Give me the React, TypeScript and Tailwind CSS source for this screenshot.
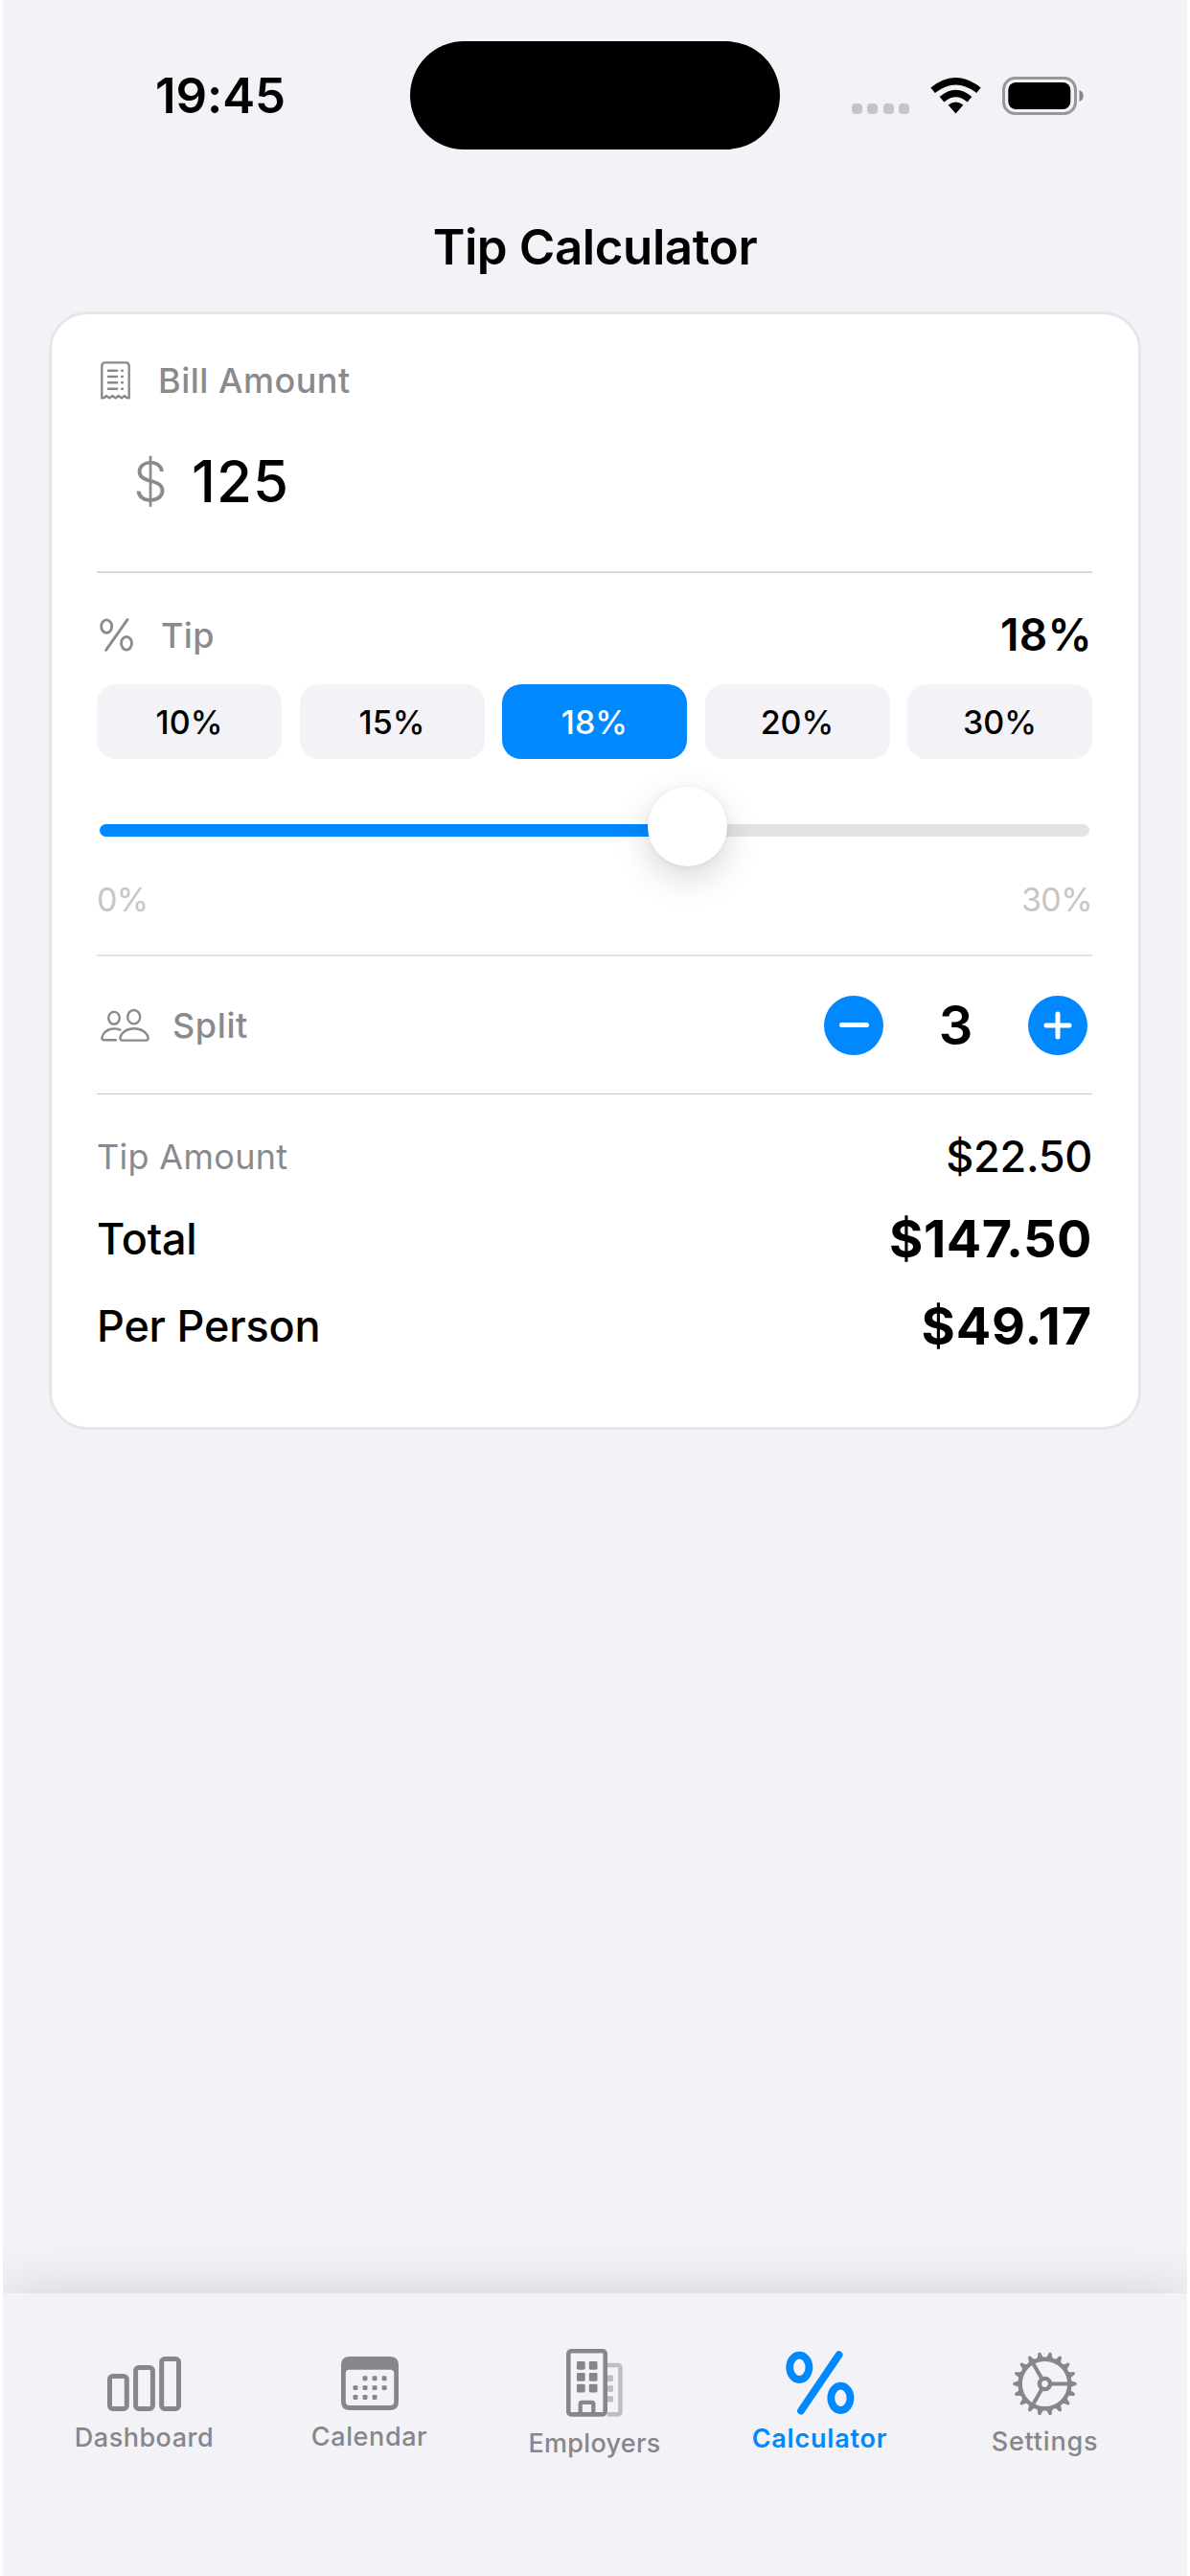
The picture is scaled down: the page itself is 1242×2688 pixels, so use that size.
import React from "react";

const tips = ["10%", "15%", "18%", "20%", "30%"];

function Wifi() {
  return (
    <svg width="53" height="38" viewBox="0 0 53 38">
      <path d="M26.5 37.5 L18.6 28.6 Q26.5 22.6 34.4 28.6 Z" fill="#000" />
      <path d="M12 22.8 Q26.5 10 41 22.8" fill="none" stroke="#000" strokeWidth="7.2" />
      <path d="M2.6 13.2 Q26.5 -5.8 50.4 13.2" fill="none" stroke="#000" strokeWidth="7.2" />
    </svg>
  );
}

function Battery() {
  return (
    <svg width="86" height="40" viewBox="0 0 86 40">
      <rect x="1.5" y="1.5" width="75" height="37" rx="12" fill="none" stroke="#98989b" strokeWidth="3" />
      <rect x="6.3" y="6" width="65" height="28" rx="8" fill="#000" />
      <path d="M80.5 14 Q84.7 15.5 84.7 20 T80.5 26 Z" fill="#87878a" />
    </svg>
  );
}

function Receipt() {
  return (
    <svg width="31" height="40" viewBox="0 0 31 40" fill="none" stroke="#8a8a8e" strokeWidth="2.4" strokeLinecap="round" strokeLinejoin="round">
      <path d="M1.3 38.3 V5 Q1.3 1.4 4.9 1.4 H26.1 Q29.7 1.4 29.7 5 V38.3 L27.2 38 L25 36 L21.8 38.4 L18.7 36 L15.5 38.4 L12.3 36 L9.2 38.4 L6 36 L3.8 38 Z" />
      <path d="M8 9.7 H17.2 M8 16 H17.2 M8 22.3 H17.2 M8 28.7 H17.2 M22.1 9.7 H22.9 M22.1 16 H22.9 M22.1 22.3 H22.9 M22.1 28.7 H22.9" />
    </svg>
  );
}

function PercentThin() {
  return (
    <svg width="35" height="35" viewBox="0 0 35 35" fill="none" stroke="#8a8a8e" strokeWidth="2.8" strokeLinecap="round">
      <ellipse cx="7.2" cy="8.6" rx="5.5" ry="6.8" />
      <ellipse cx="28" cy="26.3" rx="5.5" ry="6.8" />
      <path d="M29 1.6 L6.6 33.4" />
    </svg>
  );
}

function People() {
  return (
    <svg width="51" height="36" viewBox="0 0 51 36" fill="none" stroke="#8a8a8e" strokeWidth="2.4" strokeLinecap="round" strokeLinejoin="round">
      <ellipse cx="14" cy="10.3" rx="5.8" ry="6.4" />
      <ellipse cx="34.7" cy="9.2" rx="6.5" ry="7.2" />
      <path d="M23 33.6 C21 33.6 20.3 32.6 20.5 30.8 C21.2 26 27 21.2 35 21.2 C43 21.2 48.9 26 49.6 30.8 C49.8 32.6 49 33.6 47 33.6 Z" />
      <path d="M16 33.3 H3.8 C1.8 33.3 1.2 32.3 1.4 30.6 C2.2 26 7.2 21.4 14 21.4 C16.5 21.4 18.5 21.9 20.2 22.7" />
    </svg>
  );
}

function BarsIcon() {
  return (
    <svg width="77" height="57" viewBox="0 0 77 57" fill="none" stroke="#87868b" strokeWidth="5">
      <rect x="2.5" y="20.5" width="17.8" height="34" rx="3.2" />
      <rect x="29.6" y="11.5" width="17.8" height="43" rx="3.2" />
      <rect x="56.7" y="2.5" width="17.8" height="52" rx="3.2" />
    </svg>
  );
}

function CalendarIcon() {
  const dots = [
    [1, 0], [2, 0], [3, 0],
    [0, 1], [1, 1], [2, 1], [3, 1],
    [0, 2], [1, 2], [2, 2],
  ];
  return (
    <svg width="60" height="56" viewBox="0 0 60 56" fill="#87868b">
      <path fillRule="evenodd" d="M9 0 H51 Q60 0 60 9 V47 Q60 56 51 56 H9 Q0 56 0 47 V9 Q0 0 9 0 Z M8.5 13.7 Q4.8 13.7 4.8 17.4 V47 Q4.8 51 8.8 51 H51.2 Q55.2 51 55.2 47 V17.4 Q55.2 13.7 51.5 13.7 Z" />
      {dots.map(([c, r]) => (
        <rect key={`${c}-${r}`} x={12.5 + c * 10.05} y={20.3 + r * 9.85} width="4.9" height="4.9" rx="1.2" />
      ))}
    </svg>
  );
}

function BuildingIcon() {
  return (
    <svg width="59" height="71" viewBox="0 0 59 71" fill="none">
      <path d="M43 17 H53.5 Q56.4 17 56.4 20 V65.5 Q56.4 68.4 53.5 68.4 H43" stroke="#bfbec3" strokeWidth="4.6" />
      {[27.5, 38.3, 49.2].map((y) => (
        <rect key={y} x="42" y={y} width="7" height="6.4" rx="1" fill="#bfbec3" />
      ))}
      <rect x="2.3" y="2.3" width="38.4" height="66.1" rx="2.8" stroke="#87868b" strokeWidth="4.6" />
      {[13, 25, 36.8].map((y) => (
        <React.Fragment key={y}>
          <rect x="11" y={y} width="8.7" height="8.7" rx="1.4" fill="#87868b" />
          <rect x="23.8" y={y} width="8.7" height="8.7" rx="1.4" fill="#87868b" />
        </React.Fragment>
      ))}
      <path d="M14.7 68 V57.2 Q14.7 55.8 16.1 55.8 H26.9 Q28.3 55.8 28.3 57.2 V68" stroke="#87868b" strokeWidth="4.2" />
    </svg>
  );
}

function PercentBold() {
  return (
    <svg width="72" height="67" viewBox="0 0 72 67" fill="none" stroke="#0088ff" strokeLinecap="round">
      <ellipse cx="14.3" cy="17.3" rx="10.1" ry="12.7" strokeWidth="7.8" />
      <ellipse cx="57.4" cy="49.3" rx="10.1" ry="12.7" strokeWidth="7.8" />
      <path d="M55.6 4.2 L16 62.6" strokeWidth="7.8" />
    </svg>
  );
}

function GearIcon() {
  const teeth = Array.from({ length: 18 }, (_, i) => i * 20);
  return (
    <svg width="67" height="67" viewBox="-33.5 -33.5 67 67" fill="none" stroke="#87868b">
      <circle r="25.8" strokeWidth="4.4" />
      <circle r="5.6" strokeWidth="4.4" />
      {[0, 120, 240].map((a) => (
        <path key={a} d="M7 0 H25" strokeWidth="4" transform={`rotate(${a})`} />
      ))}
      {teeth.map((a) => (
        <path key={a} d="M27 -3.8 Q28.6 -2.2 32 -1.7 Q33.3 -1.1 33.3 0 Q33.3 1.1 32 1.7 Q28.6 2.2 27 3.8 Z" fill="#87868b" stroke="none" transform={`rotate(${a})`} />
      ))}
    </svg>
  );
}

function TabItem({ icon, label, className }: { icon: React.ReactNode; label: string; className: string }) {
  return (
    <div className={`flex w-[235px] flex-col items-center text-[27px] leading-[30px] ${className}`}>
      {icon}
      <span>{label}</span>
    </div>
  );
}

export default function App() {
  return (
    <div className="h-[2688px] w-[1242px] bg-white px-[3px] font-['Inter',sans-serif] text-black">
      <div className="flex h-full flex-col overflow-hidden bg-[#f2f2f7]">
        <header>
          <div className="flex h-[199px] items-center">
            <div className="w-[425px] pt-px pl-[159px] text-[51px] leading-[60px] font-semibold tracking-[-0.1px]">19:45</div>
            <div className="h-[113px] w-[386px] rounded-[57px] bg-black" />
            <div className="flex flex-1 items-center pl-[75px]">
              <div className="flex gap-[5.6px] pt-[28px]">
                {[0, 1, 2, 3].map((i) => (
                  <div key={i} className="h-[11px] w-[10.8px] rounded-[4px] bg-[#c5c5c9]" />
                ))}
              </div>
              <div className="ml-[22px]"><Wifi /></div>
              <div className="ml-[22px]"><Battery /></div>
            </div>
          </div>
          <h1 className="flex h-[118px] items-center justify-center pt-px text-[51px] font-semibold tracking-[-0.4px]">Tip Calculator</h1>
        </header>

        <main className="mx-[48px] mt-[8px] h-[1167px] rounded-[40px] border-[3px] border-[#e5e5ea] bg-white pr-[48px] pl-[47px]">
          <div className="flex h-[138px] items-center pl-[4px] text-[36px] font-medium text-[#8a8a8e]">
            <Receipt />
            <span className="ml-[29px] tracking-[0.5px]">Bill Amount</span>
          </div>
          <div className="flex h-[73px] items-center pl-[38px] leading-[73px]">
            <span className="w-[61px] text-[57px] font-light text-[#8a8a8e]">$</span>
            <span className="text-[60px] font-medium tracking-[1px]">125</span>
          </div>
          <div className="mt-[57px] h-[2px] bg-[#dadadc]" />

          <div className="flex h-[116px] items-center justify-between pt-[13px]">
            <div className="flex items-center pl-[3px] text-[36px] font-medium text-[#8a8a8e]">
              <PercentThin />
              <span className="ml-[29px] tracking-[0.3px]">Tip</span>
            </div>
            <span className="text-[46px] font-semibold tracking-[0.3px]">18%</span>
          </div>
          <div className="grid grid-cols-5 gap-[18.5px]">
            {tips.map((t) => (
              <button
                key={t}
                className={
                  t === "18%"
                    ? "h-[78px] rounded-[20px] bg-[#0088ff] pt-px text-[34px] font-medium text-white"
                    : "h-[78px] rounded-[20px] bg-[#f2f2f7] pt-px text-[34px] font-medium text-black"
                }
              >
                {t}
              </button>
            ))}
          </div>

          <div className="relative mt-[29px] h-[83px] px-[3px] pt-[39px]">
            <div className="h-[12.5px] overflow-hidden rounded-full bg-[#e3e3e5]">
              <div className="h-full w-[614px] bg-[#0088ff]" />
            </div>
            <div className="absolute top-0 left-[575px] size-[83px] rounded-full bg-white shadow-[0_12px_36px_rgba(0,0,0,0.16),0_1px_6px_rgba(0,0,0,0.06)]" />
          </div>
          <div className="flex h-[69px] items-center justify-between text-[34px] tracking-[-0.6px] text-[#c6c6c8]">
            <span>0%</span>
            <span>30%</span>
          </div>
          <div className="mt-[23px] h-[2px] bg-[#e3e3e4]" />

          <div className="flex h-[143px] items-center">
            <div className="flex flex-1 items-center pl-[4px] text-[36px] font-medium text-[#8a8a8e]">
              <People />
              <span className="ml-[24px] tracking-[0.6px]">Split</span>
            </div>
            <button className="flex size-[62px] items-center justify-center rounded-full bg-[#0088ff]">
              <span className="h-[5px] w-[31px] rounded-full bg-white" />
            </button>
            <span className="w-[151px] text-center text-[56px] font-semibold">3</span>
            <button className="mr-[5px] flex size-[62px] items-center justify-center rounded-full bg-[#0088ff]">
              <svg width="30" height="30" viewBox="0 0 30 30" stroke="#fff" strokeWidth="5" strokeLinecap="round">
                <path d="M3 15 H27 M15 3 V27" />
              </svg>
            </button>
          </div>
          <div className="h-px bg-[#c6c6c8]" />

          <div className="pt-[23px]">
            <div className="flex h-[84px] items-center justify-between">
              <span className="text-[36px] tracking-[0.3px] text-[#8a8a8e]">Tip Amount</span>
              <span className="text-[45px] font-medium tracking-[-0.3px]">$22.50</span>
            </div>
            <div className="flex h-[86px] items-center justify-between pt-px">
              <span className="text-[45px] font-medium tracking-[-0.2px]">Total</span>
              <span className="text-[54px] font-bold tracking-[0.5px]">$147.50</span>
            </div>
            <div className="flex h-[96px] items-center justify-between pt-px">
              <span className="text-[45px] font-medium tracking-[-0.2px]">Per Person</span>
              <span className="text-[54px] font-bold tracking-[0.9px]">$49.17</span>
            </div>
          </div>
        </main>

        <nav className="mt-auto flex h-[295px] bg-[#f2f2f7] px-[30px] shadow-[0_0_56px_rgba(0,0,0,0.14)]">
          <TabItem className="gap-[13px] pt-[66px] font-medium tracking-[0.5px] text-[#87868b]" icon={<BarsIcon />} label="Dashboard" />
          <TabItem className="gap-[13px] pt-[66px] font-medium tracking-[0.6px] text-[#87868b]" icon={<CalendarIcon />} label="Calendar" />
          <TabItem className="gap-[13px] pt-[58px] font-medium tracking-[0.3px] text-[#87868b]" icon={<BuildingIcon />} label="Employers" />
          <TabItem className="gap-[10px] pt-[60px] font-semibold tracking-[0.8px] text-[#0088ff]" icon={<PercentBold />} label="Calculator" />
          <TabItem className="gap-[12px] pt-[61px] font-medium tracking-[0.8px] text-[#87868b]" icon={<GearIcon />} label="Settings" />
        </nav>
      </div>
    </div>
  );
}
